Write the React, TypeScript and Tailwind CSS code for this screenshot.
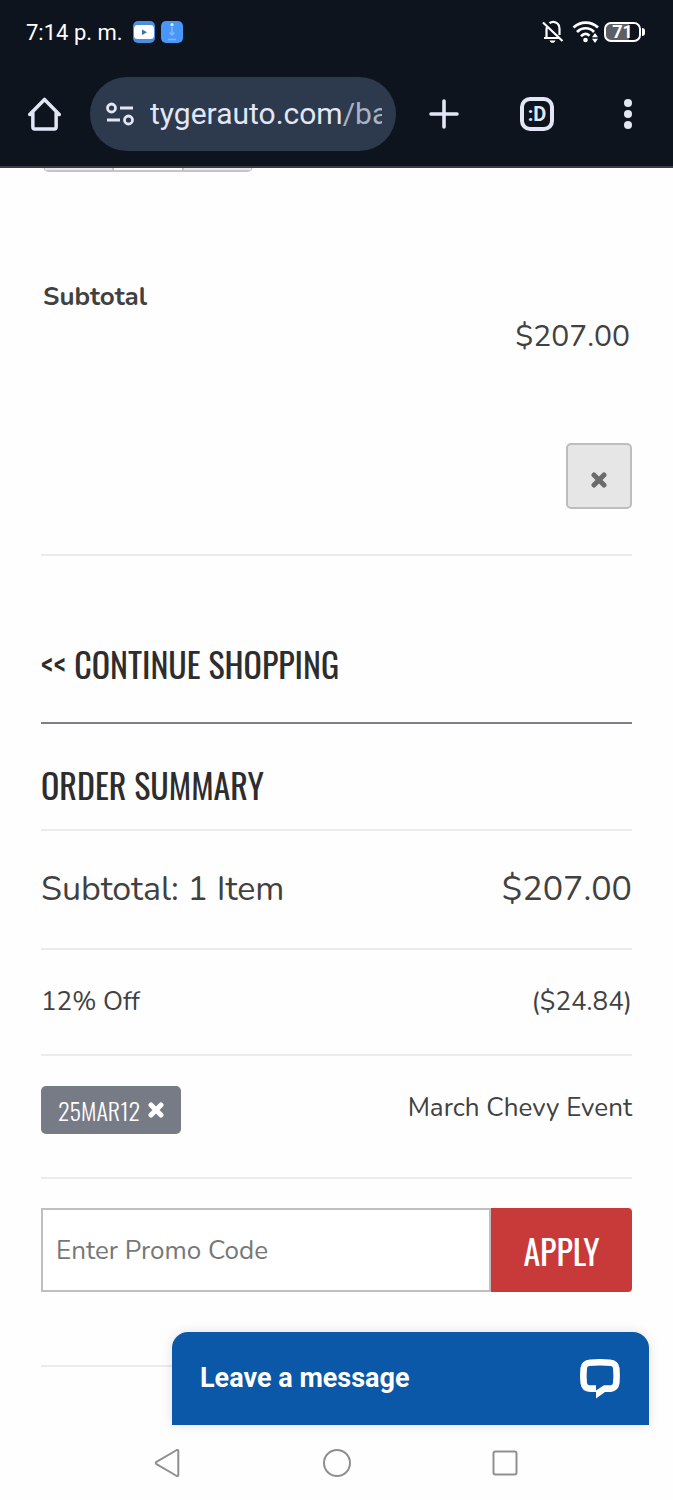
import React from 'react';

const headingFont = "font-['Oswald','Roboto_Condensed','Liberation_Sans_Narrow',sans-serif]";
const bodyFont = "font-['Nunito','Lato',sans-serif]";

const CloseIcon: React.FC<{ className?: string }> = ({ className }) => (
  <svg viewBox="0 0 16 16" className={className} fill="none" stroke="currentColor" strokeWidth="5" aria-hidden="true">
    <path d="M3 3 13 13M13 3 3 13" strokeLinecap="round" />
  </svg>
);

const StatusBar: React.FC = () => (
  <div className="flex h-16 items-center justify-between pl-[26px] pr-7 text-[22px] text-white">
    <div className="flex items-center gap-[6px]">
      <span className="mr-1">7:14 p. m.</span>
      <svg viewBox="0 0 22 22" className="size-[22px]" aria-hidden="true">
        <rect width="22" height="22" rx="5" fill="#4a8fe0" />
        <rect x="1" y="4" width="20" height="14" rx="3.5" fill="#fff" />
        <path d="M9 8.500v5.500l5-2.700z" fill="#3d6fae" />
      </svg>
      <svg viewBox="0 0 22 22" className="size-[22px]" aria-hidden="true">
        <rect width="22" height="22" rx="5" fill="#4796f8" />
        <path d="M11 6v8M8.500 11.500 11 14l2.500-2.500M7 18.500h8" fill="none" stroke="#80b8ff" strokeWidth="1.500" />
        <circle cx="11" cy="3.700" r="1.600" fill="#d4eaff" />
      </svg>
    </div>
    <div className="flex items-center gap-2">
      <svg viewBox="0 0 22 24" className="h-6 w-[22px]" fill="none" stroke="#fff" strokeWidth="2.200" aria-hidden="true">
        <path d="M1 2.500 20.500 21M2 18h15.500M4.500 18V9.500c0-1.300.3-2.500.9-3.500M7.500 3.200C11 .5 17.500 2 17.500 9v6" />
        <path d="M7.500 20.500h6c-.5 1.700-1.600 2.300-3 2.300s-2.500-.6-3-2.300z" fill="#fff" stroke="none" />
      </svg>
      <svg viewBox="0 0 28 24" className="h-6 w-7" fill="none" stroke="#fff" strokeWidth="2.700" aria-hidden="true">
        <path d="M1.500 7.500c7-6.500 17.500-6.500 24.500 0M5 12c5-5 12.500-5 17 0M9 16.200c2.800-2.800 6-2.800 8.500-.5" />
        <circle cx="13.500" cy="20" r="2.300" fill="#fff" stroke="none" />
        <path d="M23 13l3 4.300h-6zM23 23l3-4.300h-6z" fill="#fff" stroke="none" />
      </svg>
      <div className="-ml-1 flex items-center gap-px">
        <div className="flex h-5 w-[37px] items-center justify-center rounded-[7px] border-2 border-white bg-linear-to-r from-[#5c6064] from-70% to-transparent to-70% text-lg font-bold leading-4">
          71
        </div>
        <span className="h-2 w-[3px] rounded-r-sm bg-white" />
      </div>
    </div>
  </div>
);

const BrowserBar: React.FC = () => (
  <div className="flex h-[100px] items-center pl-7 text-[#e3e6f5]">
    <button type="button" aria-label="Home" className="mr-[29px]">
      <svg viewBox="0 0 34 36" className="h-9 w-[33px]" fill="none" stroke="currentColor" strokeWidth="3.600" strokeLinecap="round" strokeLinejoin="round" aria-hidden="true">
        <path d="M1.800 18.500 17 3l15.200 15.500M5 16.500v15q0 2 2 2h20q2 0 2-2v-15" />
      </svg>
    </button>
    <button type="button" aria-label="Address" className="flex h-[74px] min-w-0 flex-1 items-center gap-4 rounded-full bg-[#2d394c] pl-4 pr-[14px] text-left">
      <svg viewBox="0 0 28 24" className="h-6 w-7 shrink-0" fill="none" stroke="currentColor" strokeWidth="2.800" aria-hidden="true">
        <circle cx="5.500" cy="6" r="4" />
        <circle cx="22.500" cy="18" r="4" />
        <path d="M14 6h13M1 18h13" />
      </svg>
      <span className="overflow-hidden whitespace-nowrap text-[30px] leading-10">
        tygerauto.com<span className="text-[#a9b2c5]">/ba</span>
      </span>
    </button>
    <button type="button" aria-label="New tab" className="flex w-24 justify-center">
      <svg viewBox="0 0 30 30" className="size-[30px]" stroke="currentColor" strokeWidth="3.600" strokeLinecap="round" aria-hidden="true">
        <path d="M2 15h26M15 2v26" />
      </svg>
    </button>
    <button type="button" aria-label="Tabs" className="flex w-[90px] justify-center">
      <span className="flex size-[34px] items-center justify-center rounded-[10px] border-4 border-current text-xl font-bold leading-5">
        :D
      </span>
    </button>
    <button type="button" aria-label="Menu" className="flex w-[91px] flex-col items-center gap-[3px]">
      <span className="size-2 rounded-full bg-current" />
      <span className="size-2 rounded-full bg-current" />
      <span className="size-2 rounded-full bg-current" />
    </button>
  </div>
);

export default function App() {
  return (
    <div className={`flex min-h-screen flex-col bg-[#fefefe] text-[#414141] ${bodyFont}`}>
      <header className="border-b-2 border-[#3a3f46] bg-[#0d141e] pb-[2px] font-['Roboto',sans-serif]">
        <StatusBar />
        <BrowserBar />
      </header>

      <main className="px-[41px]">
        {/* Basket item */}
        <section className="border-b-2 border-[#ebebeb] pb-[45px]">
          <div className="ml-[2px] flex h-1 w-[210px] items-end overflow-hidden">
            <div className="flex h-10 w-full shrink-0 divide-x-2 divide-[#c4c4c8] rounded-md border-2 border-[#c4c4c8]">
              <button type="button" aria-label="Decrease quantity" className="flex-1 bg-[#e8e8e8]" />
              <span className="flex-1" />
              <button type="button" aria-label="Increase quantity" className="flex-1 bg-[#e8e8e8]" />
            </div>
          </div>
          <div className="mt-[105px] px-[2px]">
            <p className="text-[26px] font-bold leading-10">Subtotal</p>
            <p className="text-right text-[30px] leading-10">$207.00</p>
          </div>
          <button
            type="button"
            aria-label="Remove item"
            className="ml-auto mt-[86px] flex size-[66px] items-center justify-center rounded-[5px] border-2 border-[#bdbdbd] bg-[#e6e6e6] pt-2 text-[#6b6b6b]"
          >
            <CloseIcon className="size-4" />
          </button>
        </section>

        <div className={`border-b-2 border-[#7f8084] pb-[30px] pt-20 ${headingFont}`}>
          <a href="#shop" className="text-[34px] leading-14 text-[#2d2d2d]">&lt;&lt; CONTINUE SHOPPING</a>
        </div>

        {/* Order summary */}
        <section>
          <h2 className={`border-b-2 border-[#ebebeb] pb-4 pt-[33px] text-[34px] leading-14 text-[#2d2d2d] ${headingFont}`}>
            ORDER SUMMARY
          </h2>
          <div className="flex justify-between border-b-2 border-[#ebebeb] pb-[35px] pt-[34px] text-[34px] leading-12">
            <span>Subtotal: 1 Item</span>
            <span>$207.00</span>
          </div>
          <div className="flex justify-between border-b-2 border-[#ebebeb] pb-7 pt-7 text-[26px] leading-12">
            <span>12% Off</span>
            <span>($24.84)</span>
          </div>
          <div className="flex justify-between border-b-2 border-[#ebebeb] pb-[43px] pt-[30px] text-[26px]">
            <button type="button" className={`flex h-12 w-[140px] items-center justify-center gap-2 rounded-[5px] bg-[#767b86] text-2xl font-light text-white ${headingFont}`}>
              25MAR12
              <CloseIcon className="size-4" />
            </button>
            <span className="leading-11">March Chevy Event</span>
          </div>
          <form className="flex border-b-2 border-[#ebebeb] pb-[73px] pt-[29px]" onSubmit={(e) => e.preventDefault()}>
            <input
              type="text"
              aria-label="Promo code"
              placeholder="Enter Promo Code"
              className="h-21 min-w-0 flex-1 border-2 border-[#bfbfbf] bg-white px-[13px] text-[26px] placeholder:text-[#777777]"
            />
            <button type="submit" className={`h-21 w-[141px] rounded-r-[4px] bg-[#c83a39] text-[34px] text-white ${headingFont}`}>
              APPLY
            </button>
          </form>
        </section>
      </main>

      <footer className="relative mt-auto flex h-[75px] items-center bg-[#fefefe]">
        <button
          type="button"
          className="absolute bottom-full right-6 flex h-[93px] w-[477px] items-center justify-between rounded-t-2xl bg-[#0b57a8] px-7 font-['Roboto',sans-serif] text-[27px] font-bold text-white shadow-[0_0_12px_rgba(0,0,0,0.12)]"
        >
          Leave a message
          <svg viewBox="0 0 42 41" className="h-[41px] w-[42px]" fill="currentColor" aria-hidden="true">
            <path
              fillRule="evenodd"
              d="M11 1.500Q21 .5 31 1.500 39.500 2 40.600 10q.6 8 0 15-1.100 8-8.600 9h-6l-9 6.500V34h-6Q2.500 33.500 1.400 25q-.7-7.500 0-15Q2.500 2 11 1.500zM10 8Q8.300 8.300 8 10q-.7 7.500 0 15 .3 2 2 2.200h7v5.300l8-5.300h7q1.700-.2 2-2.200.7-7.500 0-15-.3-1.700-2-2-11-.9-22 0z"
            />
          </svg>
        </button>
        <nav className="mx-auto flex w-3/4 justify-around text-[#8f8f8f]">
          <button type="button" aria-label="Back">
            <svg viewBox="0 0 28 30" className="h-[30px] w-7" fill="none" stroke="currentColor" strokeWidth="2" strokeLinejoin="round" aria-hidden="true">
              <path d="M22.800 2 2.500 13.800q-1.500 1.200 0 2.400L22.800 28q1.500.5 1.500-1.200V3.200q0-1.700-1.500-1.200z" />
            </svg>
          </button>
          <button type="button" aria-label="Home screen">
            <svg viewBox="0 0 28 28" className="size-7" fill="none" stroke="currentColor" strokeWidth="2" aria-hidden="true">
              <circle cx="14" cy="14" r="13" />
            </svg>
          </button>
          <button type="button" aria-label="Recent apps">
            <svg viewBox="0 0 28 28" className="size-7" fill="none" stroke="currentColor" strokeWidth="2" aria-hidden="true">
              <rect x="2.500" y="2.500" width="23" height="23" rx="2" />
            </svg>
          </button>
        </nav>
      </footer>
    </div>
  );
}
